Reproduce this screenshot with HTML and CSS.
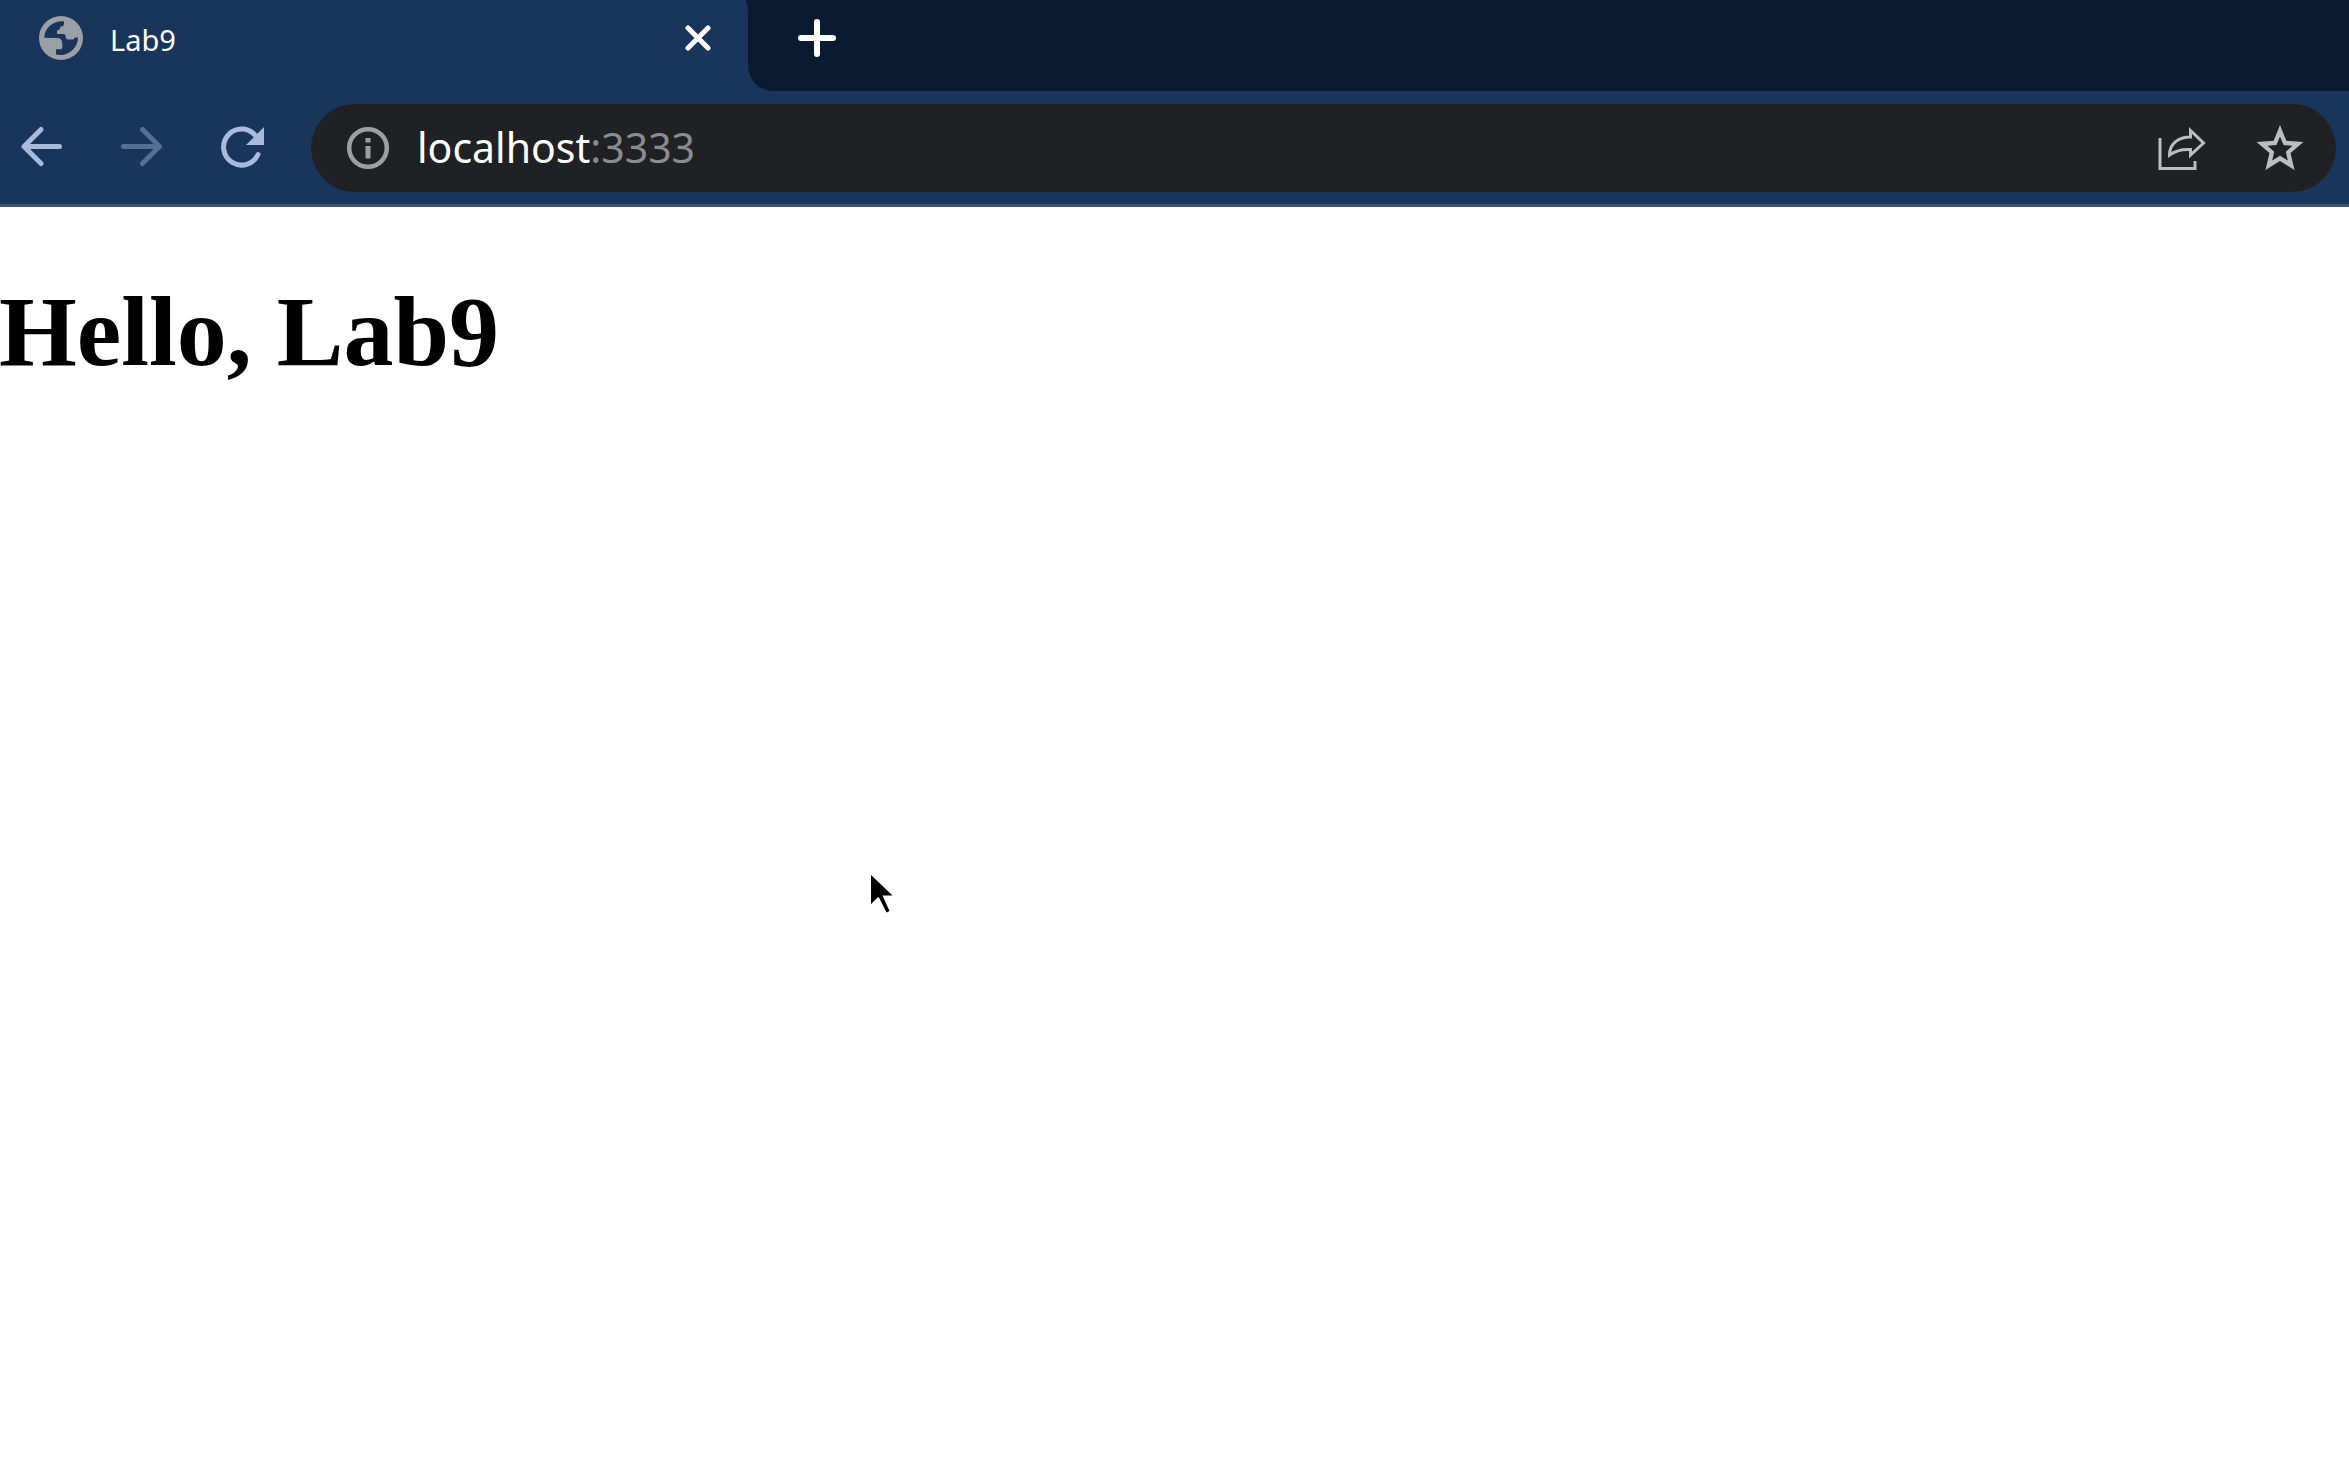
FILE: index.html
```html
<!DOCTYPE html>
<html lang="en">
<head>
<meta charset="utf-8">
<meta name="viewport" content="width=device-width, initial-scale=1">
<title>Lab9</title>
<link rel="stylesheet" href="styles.css">
</head>
<body>
<header class="browser">
  <div class="tab-strip">
    <div class="tab">
      <svg class="icon" viewBox="0 0 44 44" width="44" height="44" aria-hidden="true">
        <circle cx="22" cy="22" r="22" fill="#9aa0a6"/>
        <path fill="#1a355b" d="M5.3 21.7C5.3 12 14 4.6 25 5.3V8C25 10 23.6 10.6 21.5 10.6C21.5 13 20.5 14 18 14.4V18H24C26 18 26.7 19 26.7 21C26.7 22.8 27.4 23.4 29 23.4H34C35.2 23.4 35 21.4 36.5 21.4H39C39 32.5 28.5 41 17 38.5V33.3H21C22.8 33.3 23.3 32.6 23.3 31V27.5C23.3 24 21.5 22 18 22Z"/>
      </svg>
      <span class="tab-title">Lab9</span>
      <button class="icon-button" type="button" aria-label="Close tab">
        <svg class="icon" viewBox="0 0 26 26" width="26" height="26" stroke="#fff" stroke-width="5" stroke-linecap="round"><path d="M3 3L23 23M23 3L3 23"/></svg>
      </button>
    </div>
    <div class="strip-rest">
      <button class="icon-button" type="button" aria-label="New tab">
        <svg class="icon" viewBox="0 0 38 38" width="38" height="38" stroke="#fff" stroke-width="6" stroke-linecap="round"><path d="M19 3V35M3 19H35"/></svg>
      </button>
    </div>
  </div>
  <div class="toolbar">
    <nav class="nav" aria-label="History">
      <button class="icon-button" type="button" aria-label="Back">
        <svg class="icon" viewBox="0 0 44 44" width="44" height="44" fill="none" stroke="#a8bbdc" stroke-width="5" stroke-linecap="round" stroke-linejoin="round"><path d="M21 3.500L4 20.500L21 37.500M4 20.500H39.500"/></svg>
      </button>
      <button class="icon-button" type="button" aria-label="Forward" disabled>
        <svg class="icon" viewBox="0 0 44 44" width="44" height="44" fill="none" stroke="#566f92" stroke-width="5" stroke-linecap="round" stroke-linejoin="round"><path d="M22.500 3.500L39.500 20.500L22.500 37.500M39 20.500H3.500"/></svg>
      </button>
      <button class="icon-button" type="button" aria-label="Reload">
        <svg class="icon" viewBox="0 0 44 44" width="44" height="44" fill="none" stroke="#a8bbdc" stroke-width="5" stroke-linecap="round"><path d="M38 28.500A18 18 0 1 1 34.500 8.500"/><path fill="#a8bbdc" stroke="none" d="M44 1V19H26Z"/></svg>
      </button>
    </nav>
    <form class="address" role="search">
      <button class="icon-button" type="button" aria-label="Site information">
        <svg class="icon" viewBox="0 0 42 42" width="42" height="42"><circle cx="21" cy="21" r="18.800" fill="none" stroke="#9aa0a6" stroke-width="4.500"/><path fill="#9aa0a6" d="M18.500 11h5v4.500h-5zM18.500 19h5v12.500h-5z"/></svg>
      </button>
      <label class="url">
        <input class="url-host" type="text" value="localhost" aria-label="Address" spellcheck="false"><span class="url-port">:3333</span>
      </label>
      <button class="icon-button" type="button" aria-label="Share">
        <svg class="icon" viewBox="0 0 48 46" width="48" height="46" fill="none" stroke="#bdbdbd" stroke-width="3"><path d="M2 13V43.500H37V36"/><path d="M32.500 5.500L45.500 18L32.500 30V24.500C24 24 17 26 11.500 30C11.500 19 20 12 32.500 12Z"/></svg>
      </button>
      <button class="icon-button" type="button" aria-label="Bookmark this page">
        <svg class="icon" viewBox="0 0 48 46" width="48" height="46" fill="#bdbdbd" fill-rule="evenodd"><path d="M24 0L30.300 15.700L47.500 17L34.500 28L38.500 45L24 36L9.500 45L13.500 28L.5 17L17.700 15.700ZM24 11.500L20.500 20L11.500 20.800L18.200 26.700L16.200 35.500L24 30.800L31.800 35.500L29.800 26.700L36.500 20.800L27.500 20Z"/></svg>
      </button>
    </form>
  </div>
</header>
<main class="page">
  <h1 class="greeting">Hello, Lab9</h1>
</main>
<svg class="pointer" viewBox="0 0 22 38" width="22" height="38" aria-hidden="true"><path d="M0 0L21.500 20.500H11.500L18.500 36L15.500 37.500L8 22.500H6.500L0 29Z"/></svg>
</body>
</html>
```
FILE: styles.css
```css
* {
  box-sizing: border-box;
}

body {
  margin: 0;
  background: #fff;
  color: #000;
  font-family: "Liberation Serif", "Times New Roman", serif;
}

.browser {
  background: #1a355b;
  border-bottom: 3px solid #3c5577;
  color: #fff;
  font-family: "Noto Sans", "Segoe UI", sans-serif;
}

.icon {
  display: block;
}

.icon-button {
  flex: none;
  padding: 0;
  border: 0;
  background: none;
}

.tab-strip {
  display: flex;
  background: linear-gradient(#0a1a31 50%, #1a355b 50%);
}

.tab {
  display: flex;
  align-items: center;
  width: 748px;
  height: 76px;
  padding: 0 37px 0 39px;
  border-top-right-radius: 3px 12px;
  background: #1a355b;
}

.tab-title {
  flex: 1;
  margin-left: 27px;
  padding-top: 4px;
  font-size: 29px;
  line-height: 40px;
}

.strip-rest {
  flex: 1;
  height: 91px;
  padding: 19px 50px;
  border-bottom-left-radius: 25px;
  background: #0a1a31;
}

.toolbar {
  display: flex;
  align-items: center;
  gap: 47px;
  padding: 13px 13px 12px 20px;
}

.nav {
  display: flex;
  gap: 56px;
}

.address {
  display: flex;
  flex: 1;
  align-items: center;
  height: 88px;
  padding: 0 32px 0 36px;
  gap: 50px;
  border-radius: 44px;
  background: #202124;
}

.url {
  display: flex;
  flex: 1;
  align-items: center;
  margin-left: -22px;
  padding-bottom: 2px;
  font-size: 41px;
  line-height: 56px;
}

.url-host {
  field-sizing: content;
  padding: 0;
  border: 0;
  outline: 0;
  background: none;
  color: #fff;
  font: inherit;
}

.url-port {
  color: #8b8c8f;
}

.page {
  padding-top: 67px;
}

.greeting {
  margin: 0;
  font-size: 100px;
  line-height: 116px;
  text-indent: -1px;
}

/* Mouse pointer floating over the page */
.pointer {
  position: absolute;
  top: 875px;
  left: 871px;
}
```
